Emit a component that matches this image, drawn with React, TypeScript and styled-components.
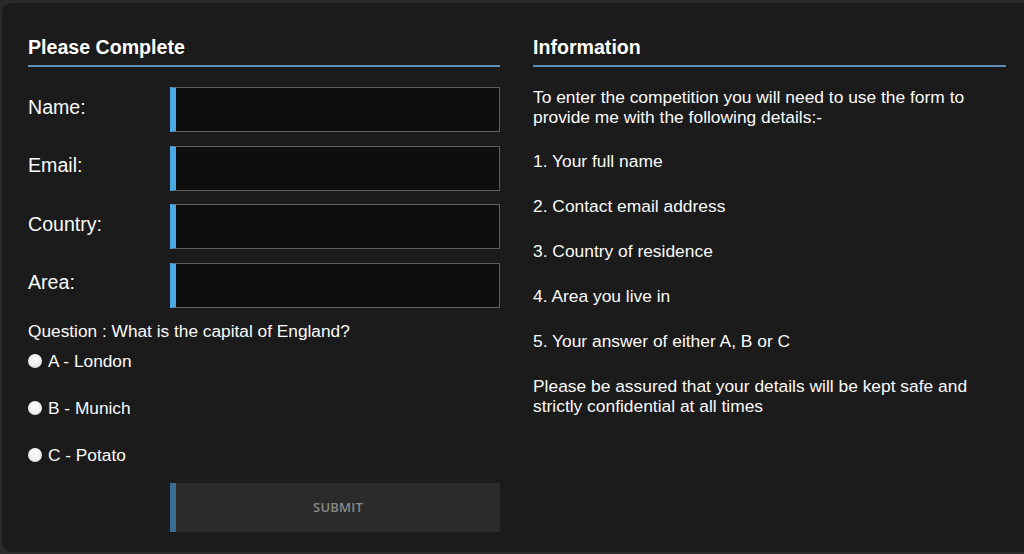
import styled, { createGlobalStyle } from 'styled-components'

const GlobalStyle = createGlobalStyle`
  * { box-sizing: border-box; }
  html, body {
    margin: 0;
    padding: 0;
    background: #2a2a2a;
    font-family: "Liberation Sans", Arial, sans-serif;
  }
`

const Page = styled.div`
  padding: 3px 0 2px 2px;
  height: 554px;
`

const Panel = styled.main`
  display: grid;
  grid-template-columns: 472px 473px;
  column-gap: 33px;
  height: 100%;
  padding: 33px 18px 0 26px;
  background: #1b1b1b;
  border-radius: 10px 0 0 10px;
  color: #fafafa;
`

const Column = styled.section`
  display: flex;
  flex-direction: column;
`

const Heading = styled.h2`
  margin: 0 0 20px;
  padding-bottom: 7px;
  font-size: 19.6px;
  line-height: 22px;
  font-weight: 700;
  color: #fff;
  border-bottom: 2px solid #5c8fb3;
`

const Fields = styled.div`
  display: flex;
  flex-direction: column;
  gap: 13.6px;
`

const Row = styled.label`
  display: grid;
  grid-template-columns: 142px 1fr;
  align-items: center;
  height: 45px;
`

const LabelText = styled.span`
  font-size: 19.6px;
  padding-bottom: 5px;
`

const Input = styled.input`
  height: 45px;
  width: 100%;
  background: #0e0e0e;
  border: 1px solid #606060;
  border-left: 6px solid #4aa9e4;
  outline: none;
  color: #fff;
  font-size: 16px;
  padding: 0 10px;
`

const Question = styled.p`
  margin: 13px 0 0;
  font-size: 17.3px;
  line-height: 20px;
`

const Options = styled.div`
  display: flex;
  flex-direction: column;
  gap: 27px;
  margin-top: 10px;
`

const Option = styled.label`
  display: flex;
  align-items: center;
  gap: 6px;
  font-size: 17.3px;
  line-height: 20px;
`

const Radio = styled.input`
  appearance: none;
  margin: 0;
  width: 14px;
  height: 14px;
  border-radius: 50%;
  background: radial-gradient(circle at 50% 35%, #ffffff 0%, #ececec 60%, #cfcfcf 100%);
`

const Submit = styled.button`
  align-self: flex-end;
  margin-top: 18px;
  width: 330px;
  height: 49px;
  background: #2b2b2b;
  border: none;
  border-left: 6px solid #3a6c91;
  color: #8a8a8a;
  font-family: "Open Sans", "Liberation Sans", sans-serif;
  font-size: 13px;
  font-weight: 600;
  letter-spacing: 0.2px;
`

const Text = styled.p`
  margin: 0 0 25px;
  font-size: 17.4px;
  line-height: 20px;
  &:first-of-type { margin-bottom: 24px; }
`

const fields = ['Name:', 'Email:', 'Country:', 'Area:']
const answers = ['A - London', 'B - Munich', 'C - Potato']
const details = [
  '1. Your full name',
  '2. Contact email address',
  '3. Country of residence',
  '4. Area you live in',
  '5. Your answer of either A, B or C',
]

export default function App() {
  return (
    <Page>
      <GlobalStyle />
      <Panel>
        <Column as="form" onSubmit={(e: React.FormEvent) => e.preventDefault()}>
          <Heading>Please Complete</Heading>
          <Fields>
            {fields.map((f) => (
              <Row key={f}>
                <LabelText>{f}</LabelText>
                <Input type="text" />
              </Row>
            ))}
          </Fields>
          <Question>Question : What is the capital of England?</Question>
          <Options>
            {answers.map((a) => (
              <Option key={a}>
                <Radio type="radio" name="answer" />
                {a}
              </Option>
            ))}
          </Options>
          <Submit type="submit">SUBMIT</Submit>
        </Column>
        <Column>
          <Heading>Information</Heading>
          <Text>
            To enter the competition you will need to use the form to
            <br />
            provide me with the following details:-
          </Text>
          {details.map((d) => (
            <Text key={d}>{d}</Text>
          ))}
          <Text>
            Please be assured that your details will be kept safe and
            <br />
            strictly confidential at all times
          </Text>
        </Column>
      </Panel>
    </Page>
  )
}
